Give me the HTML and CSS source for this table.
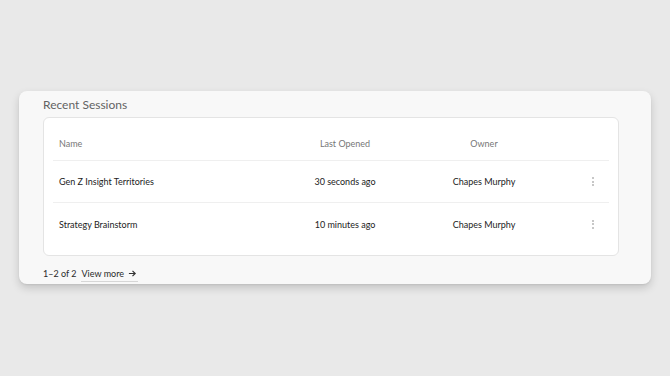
FILE: index.html
```html
<!DOCTYPE html>
<html>
<head>
<meta charset="utf-8">
<link rel="stylesheet" href="styles.css">
</head>
<body>
<section class="panel">
  <h2 class="title">Recent Sessions</h2>
  <div class="table-card">
    <div class="row head">
      <div class="c-name">Name</div>
      <div class="c-mid">Last Opened</div>
      <div class="c-mid">Owner</div>
      <div></div>
    </div>
    <div class="row">
      <div class="c-name">Gen Z Insight Territories</div>
      <div class="c-mid">30 seconds ago</div>
      <div class="c-mid">Chapes Murphy</div>
      <div class="c-menu"><span class="kebab"><i></i><i></i><i></i></span></div>
    </div>
    <div class="row last">
      <div class="c-name">Strategy Brainstorm</div>
      <div class="c-mid">10 minutes ago</div>
      <div class="c-mid">Chapes Murphy</div>
      <div class="c-menu"><span class="kebab"><i></i><i></i><i></i></span></div>
    </div>
  </div>
  <div class="footer">
    <span class="count">1–2 of 2</span>
    <a class="more">View more <svg width="9" height="9" viewBox="0 0 10 10"><path d="M1 5h7M5 2l3 3-3 3" fill="none" stroke="#333" stroke-width="1.3"/></svg></a>
  </div>
</section>
</body>
</html>
```

FILE: styles.css
```css
* { box-sizing: border-box; }
html, body { margin: 0; padding: 0; }
body {
  background: #e9e9e9;
  font-family: Lato, "Noto Sans", sans-serif;
  width: 670px;
  height: 376px;
  padding: 91px 19px 0 19px;
}
.panel {
  background: #f8f8f8;
  border-radius: 8px;
  height: 193px;
  padding: 0 32px 0 24px;
  box-shadow: 0 4px 8px rgba(0,0,0,0.16), 0 1px 2px rgba(0,0,0,0.06);
}
.title {
  margin: 0;
  padding-top: 5px;
  height: 26px;
  font-size: 12px;
  font-weight: 400;
  color: #636363;
  line-height: 17px;
}
.table-card {
  background: #fff;
  border: 1px solid #e4e4e4;
  border-radius: 6px;
  padding: 9px 9px 9px;
  height: 139px;
}
.row {
  display: grid;
  grid-template-columns: 222px 140px 138px 1fr;
  align-items: center;
  height: 42px;
  border-bottom: 1px solid #efefef;
  font-size: 9px;
  color: #222;
}
.row.head { height: 34px; color: #777; }
.row.last { border-bottom: none; }
.c-name { padding-left: 6px; }
.c-mid { text-align: center; }
.c-menu { justify-self: end; padding-right: 15px; display: flex; }
.kebab { display: flex; flex-direction: column; gap: 1.5px; }
.kebab i { width: 2px; height: 2px; background: #b5b5b5; border-radius: 1px; display: block; }
.footer {
  display: flex;
  align-items: center;
  gap: 5px;
  height: 36px;
  font-size: 9px;
  color: #2a2a2a;
  padding-bottom: 1px;
}
.more {
  display: inline-flex;
  align-items: center;
  gap: 4px;
  padding: 1px 1px 2px 0;
  border-bottom: 1px solid #d6d6d6;
  margin-top: 2px;
}
```
